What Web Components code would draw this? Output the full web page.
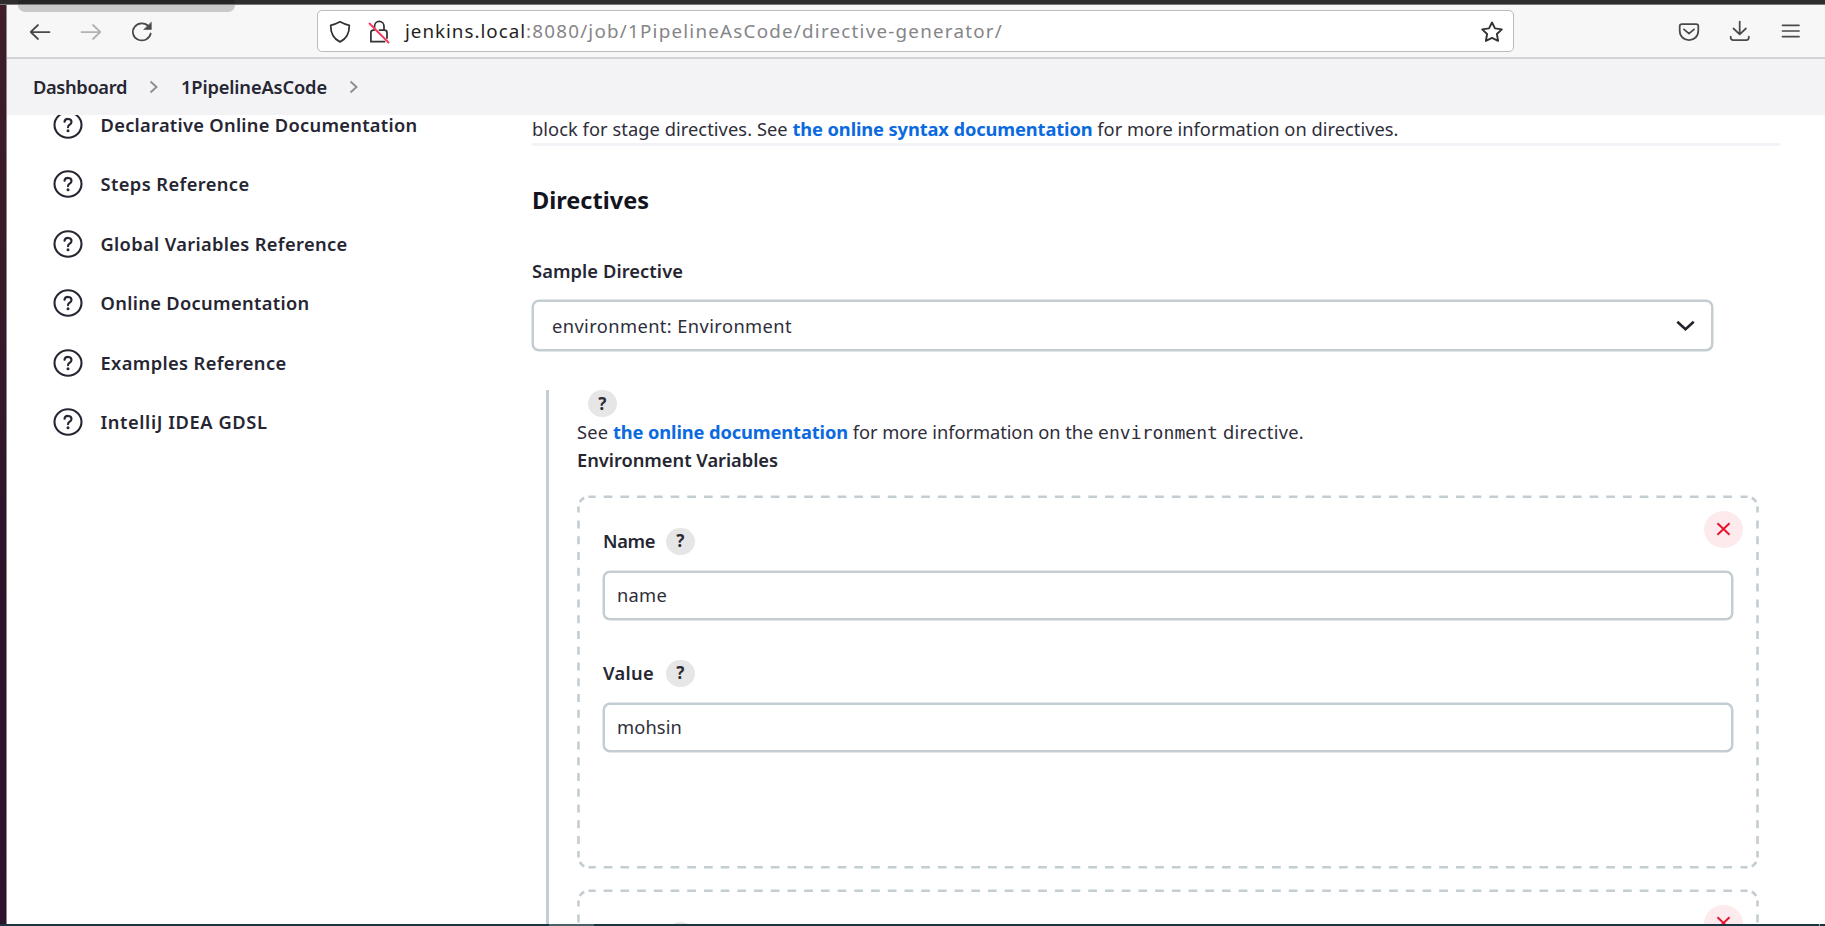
<!DOCTYPE html>
<html lang="en"><head><meta charset="utf-8"><title>Directive Generator</title>
<style>
html,body{margin:0;height:926px;overflow:hidden;background:#fff}
body{font:18.300px/28px "Noto Sans","Open Sans",sans-serif;color:#2e2e3a}
</style></head><body>
<desktop-window></desktop-window>
<script>
const make=(name,html,setup)=>customElements.define(name,class extends HTMLElement{
  constructor(){super();const t=document.createElement('template');t.innerHTML=html;
    this.attachShadow({mode:'open'}).append(t.content.cloneNode(true));}
  connectedCallback(){if(setup)setup(this,this.shadowRoot);}
});

make('desktop-window',`<style>
:host{display:grid;grid-template-columns:7px 1fr;grid-template-rows:5px 919px 2px;width:1825px;height:926px;position:relative;overflow:hidden}
.top{grid-column:1/3;background:#302d2f;border-bottom:1px solid #777;box-sizing:border-box;overflow:hidden}
.left{background:linear-gradient(#3f1d29,#35182b 40%,#2c142b 60%,#2b132c);border-right:1px solid #8f868d;box-sizing:border-box}
.app{display:flex;flex-direction:column;min-width:0;overflow:hidden;background:#fff}
.dock{grid-column:1/3;background:#1f3442;display:flex}
.dock i{margin-left:549px;width:45px;background:#4c6068}
.dock b{margin-left:1225px;width:1px;background:#9aa5ac}
.tip{position:absolute;left:18px;top:-14px;width:217px;height:26px;border-radius:0 0 7px 7px;background:linear-gradient(#272526 18px,#777 18px,#777 19px,#c9c9c9 19px);overflow:hidden;color:#55504f;font-size:16px;line-height:18px}
.tip fit-text{display:block;margin:-1px 0 0 12px}
</style><div class="top"></div><div class="left"></div>
<div class="app"><browser-bar></browser-bar><bread-crumbs></bread-crumbs><jenkins-page></jenkins-page></div>
<div class="dock"><i></i><b></b></div>
<div class="tip"><fit-text w="193">Firefox Web Browser</fit-text></div>`);

make('browser-bar',`<style>
:host{display:flex;align-items:center;flex:none;height:54px;box-sizing:border-box;background:#f7f7f7;border-bottom:2px solid #d3d3d3;padding-left:22px;color:#4a4a4a}
svg{display:block;flex:none;fill:none;stroke:currentColor;stroke-width:1.750;stroke-linecap:round;stroke-linejoin:round;position:relative;top:.5px}
.url{display:flex;align-items:center;box-sizing:border-box;margin-left:163px;width:1197px;height:42px;background:#fff;border:1px solid #bbb;border-radius:5px;padding-left:11px;color:#1f1f22;font-size:18.800px}
.url svg{color:#333}
.url span{color:#858587}
</style>
<svg width="22" height="22" viewBox="0 0 22 22"><path d="M20.500 11H2M9 4L1.700 11L9 18"/></svg>
<svg width="22" height="22" viewBox="0 0 22 22" style="margin-left:29px;color:#b2b2b2"><path d="M1.500 11H20M13 4l7.300 7l-7.300 7"/></svg>
<svg width="24" height="22" viewBox="0 0 24 22" style="margin-left:28px"><path d="M20.700 12.500A9 8.500 0 1 1 18.600 5.300"/><path d="M21.300 1.500V8.500H14z" fill="currentColor" stroke-width=".6"/></svg>
<div class="url">
<svg width="22" height="24" viewBox="0 0 22 24"><path d="M11 1.800Q15.500 4.300 20.300 5.300Q20.500 17.500 11 21.900Q1.500 17.500 1.700 5.300Q6.500 4.300 11 1.800z"/></svg>
<svg width="22" height="24" viewBox="0 0 22 24" style="margin-left:17px"><path d="M6.500 8V6.500a4.700 5 0 0 1 9.500 0V10M3 21.700H16.500M2.900 21.700V12.500q0-2.500 2.500-2.500H6.500M11.500 10H16.500q2.500 0 2.500 2.500V18"/><path d="M1.500 3.500L20.500 22.500" stroke="#f7375f" stroke-width="1.900"/></svg>
<fit-text w="121" style="margin-left:15px">jenkins.local</fit-text><span><fit-text w="477">:8080/job/1PipelineAsCode/directive-generator/</fit-text></span>
<svg width="24" height="24" viewBox="0 0 24 24" style="margin-left:auto;margin-right:9px"><path d="M12 2.500l3 5.900l6.800 1l-4.900 4.600l1.200 6.900l-6.100-3l-6.100 3l1.200-6.900l-4.900-4.600l6.800-1z" stroke-width="1.900"/></svg>
</div>
<svg width="22" height="20" viewBox="0 0 22 20" style="margin-left:164px"><path d="M4 2.200H18Q20.300 2.200 20.300 4.200V8.500C20.300 14.500 16.200 18 11 18S1.700 14.500 1.700 8.500V4.200Q1.700 2.200 4 2.200zM6 7.300L11 11.700L16 7.300"/></svg>
<svg width="22" height="22" viewBox="0 0 22 22" style="margin-left:29px;top:-.5px"><path d="M10.700 1.500V14.300M4.500 8.500l6.200 5.800l6.200-5.800M1.700 16.500v1q0 2.500 2.500 2.500H17.300q2.500 0 2.500-2.500v-1"/></svg>
<svg width="20" height="16" viewBox="0 0 20 16" style="margin-left:30px;top:-.5px"><path d="M1.500 2.300H18M1.500 8H18M1.500 13.700H18" stroke-width="1.700"/></svg>`);

make('bread-crumbs',`<style>
:host{display:flex;align-items:center;flex:none;height:56px;background:#f3f3f6;padding-left:26px;color:#262633;font-weight:600}
svg{fill:none;stroke:#8c8c92;stroke-width:1.900;flex:none}
</style><fit-text w="94">Dashboard</fit-text>
<svg width="10" height="14" viewBox="0 0 10 14" style="margin:0 22px"><path d="M1.500 1.500L7.500 7L1.500 12.500"/></svg>
<fit-text w="146">1PipelineAsCode</fit-text>
<svg width="10" height="14" viewBox="0 0 10 14" style="margin-left:22px"><path d="M1.500 1.500L7.500 7L1.500 12.500"/></svg>`);

make('side-link',`<style>
:host{display:flex;align-items:center;height:28px;line-height:18px;color:#262633;font-weight:600}
svg{display:block;flex:none;margin-right:18px;fill:none;stroke:#262633;stroke-width:2.100;stroke-linecap:round}
</style><svg width="30" height="28" viewBox="0 0 30 28"><ellipse cx="15" cy="14" rx="13.500" ry="12.700"/><path d="M11.500 10.800C11.800 6.900 18.500 7 18.500 10.900C18.500 13.800 15 13.500 15 16.200"/><circle cx="15" cy="19.800" r="1.500" fill="#262633" stroke="none"/></svg><slot></slot>`);

make('help-dot',`<style>
:host{display:flex;flex:none;align-items:center;justify-content:center;width:28.500px;height:27px;border-radius:50%;background:#e6e6e7;color:#2b2b35;font-size:17px;font-weight:700;line-height:26px}
</style>?`);

make('text-box',`<style>
:host{display:flex;align-items:center;box-sizing:border-box;height:49px;border:2px solid #c3cdd2;box-shadow:0 0 0 .5px #c3cdd2;border-radius:7px;padding:0 12px;background:#fff}
</style><slot></slot>`);

make('delete-dot',`<style>
:host{display:flex;align-items:center;justify-content:center;width:39px;height:37px;border-radius:50%;background:#fdeaec}
svg{fill:none;stroke:#e8142f;stroke-width:2}
</style><svg width="15" height="14" viewBox="0 0 15 14"><path d="M1.500 1.200L13.500 12.800M13.500 1.200L1.500 12.800"/></svg>`);

make('repeat-card',`<style>
:host{display:block;position:relative;box-sizing:border-box;width:1182px;height:374px;padding:33px 26px 0}
.frame{position:absolute;inset:0;fill:none;stroke:#c3cdd2;stroke-width:2.600}
delete-dot{position:absolute;right:16px;top:16px}
</style><svg class="frame" width="1182" height="374" viewBox="0 0 1182 374">
<path d="M26.700 1.700H1156M26.700 372.300H1156" stroke-dasharray="8.700 8.010"/>
<path d="M1.500 25.500V350M1180.500 25.500V350" stroke-dasharray="8 7.780"/>
<path d="M11.500 1.700H18.700M1163.500 1.700H1170.500M11.500 372.300H18.700M1163.500 372.300H1170.500M1.500 11.500V17.500M1180.500 11.500V17.500M1.500 356V362.500M1180.500 356V362.500M2.800 7Q4.500 4 7.300 2.700M1179.200 7Q1177.500 4 1174.700 2.700M2.800 367Q4.500 370 7.300 371.300M1179.200 367Q1177.500 370 1174.700 371.300"/>
</svg><delete-dot></delete-dot><slot></slot>`);

make('form-field',`<style>
:host{display:block;height:132px}
.label{display:flex;align-items:center;height:27px;margin-bottom:16px;color:#262633;font-weight:600}
.text{min-width:52px}
help-dot{margin-left:11px}
</style><div class="label"><div class="text"><slot name="label"></slot></div><help-dot></help-dot></div><text-box><slot></slot></text-box>`);

make('jenkins-page',`<style>
:host{display:flex;flex:1;min-height:0;overflow:hidden}
nav{display:flex;flex-direction:column;gap:31.400px;width:480px;padding-left:45.500px;box-sizing:border-box;margin-top:-4px}
main{width:1248px;margin-left:45px}
a{color:#0b6adf;font-weight:700}
p{margin:0;height:28px;white-space:nowrap;display:flex}
.rule{height:2.500px;background:#f3f3f7;border:0;margin:0}
h2{margin:39.500px 0 0;font-size:23.500px;line-height:30px;height:30px;color:#14141f;font-weight:700}
.lab{height:24px;line-height:24px;margin-top:44px;color:#262633;font-weight:600}
text-box.sel{width:1181px;height:51px;margin-top:17px;padding:0 18px;justify-content:space-between}
.sel svg{fill:none;stroke:#23232e;stroke-width:2.600}
.group{margin:39px 0 0 14px;border-left:3px solid #c3cdd2;padding-left:28px;height:540px}
.group help-dot{margin-left:11px}
code{font:18px/30px "DejaVu Sans Mono",monospace}
.env{font-weight:600;color:#262633}
repeat-card{margin-top:20px}
.first{margin-top:20.500px}
</style>
<nav>
<side-link><fit-text w="317">Declarative Online Documentation</fit-text></side-link>
<side-link><fit-text w="149">Steps Reference</fit-text></side-link>
<side-link><fit-text w="247">Global Variables Reference</fit-text></side-link>
<side-link><fit-text w="209">Online Documentation</fit-text></side-link>
<side-link><fit-text w="186">Examples Reference</fit-text></side-link>
<side-link><fit-text w="167">IntelliJ IDEA GDSL</fit-text></side-link>
</nav>
<main>
<p><fit-text w="260.5">block for stage directives. See </fit-text><a><fit-text w="300">the online syntax documentation</fit-text></a><fit-text w="306"> for more information on directives.</fit-text></p>
<hr class="rule">
<h2><fit-text w="117">Directives</fit-text></h2>
<div class="lab"><fit-text w="151">Sample Directive</fit-text></div>
<text-box class="sel"><fit-text w="240">environment: Environment</fit-text><svg width="19" height="12" viewBox="0 0 19 12" style="margin-right:-2px"><path d="M1.300 1.800L9.500 9.200L17.700 1.800"/></svg></text-box>
<div class="group">
<help-dot></help-dot>
<p style="margin-top:1px"><fit-text w="36">See </fit-text><a><fit-text w="235">the online documentation</fit-text></a><fit-text w="250"> for more information on the </fit-text><code><fit-text w="120">environment</fit-text></code><fit-text w="86"> directive.</fit-text></p>
<p class="env"><fit-text w="201">Environment Variables</fit-text></p>
<repeat-card class="first">
<form-field><fit-text slot="label" w="52">Name</fit-text><fit-text w="50">name</fit-text></form-field>
<form-field><fit-text slot="label" w="51">Value</fit-text><fit-text w="65">mohsin</fit-text></form-field>
</repeat-card>
<repeat-card>
<form-field></form-field>
</repeat-card>
</div>
</main>`);

/* Tracks its text out to the given run width, in pixels. Defined last so inherited fonts are in place. */
make('fit-text',`<style>:host{display:inline-block;flex:none;white-space:pre}</style><slot></slot>`,el=>{
  const w=+el.getAttribute('w'),n=el.textContent.length;
  const r=document.createRange();r.selectNodeContents(el);
  el.style.letterSpacing=((w-r.getBoundingClientRect().width)/n).toFixed(3)+'px';
});
</script></body></html>
